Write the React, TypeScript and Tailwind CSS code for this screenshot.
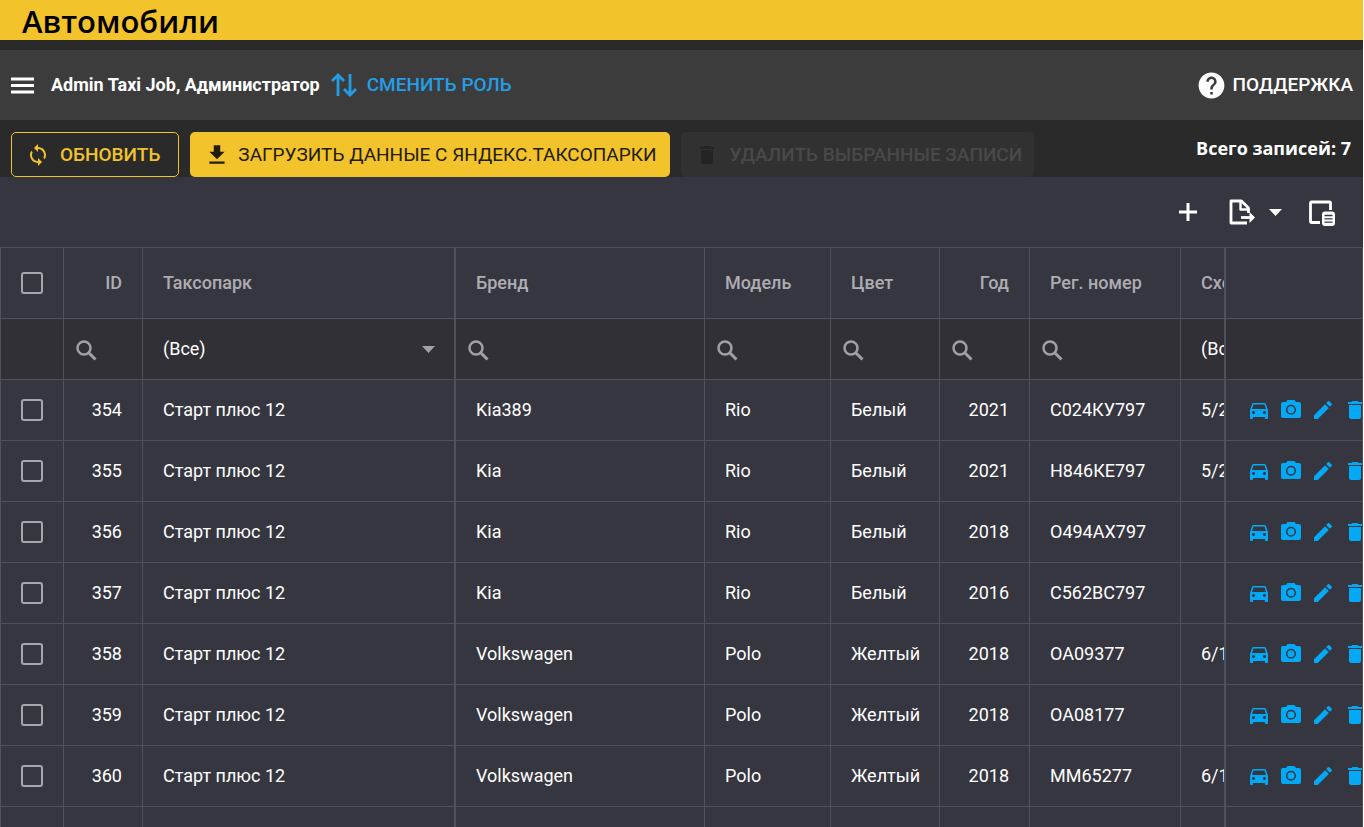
import type { ReactNode } from "react";
import {
  MdDelete,
  MdDirectionsCar,
  MdEdit,
  MdFileDownload,
  MdHelp,
  MdLoop,
} from "react-icons/md";

type Car = {
  id: number;
  brand: string;
  model: string;
  color: string;
  year: number;
  plate: string;
  scheme: string;
};

const cars: Car[] = [
  { id: 354, brand: "Kia389", model: "Rio", color: "Белый", year: 2021, plate: "С024КУ797", scheme: "5/2" },
  { id: 355, brand: "Kia", model: "Rio", color: "Белый", year: 2021, plate: "Н846КЕ797", scheme: "5/2" },
  { id: 356, brand: "Kia", model: "Rio", color: "Белый", year: 2018, plate: "О494АХ797", scheme: "" },
  { id: 357, brand: "Kia", model: "Rio", color: "Белый", year: 2016, plate: "С562ВС797", scheme: "" },
  { id: 358, brand: "Volkswagen", model: "Polo", color: "Желтый", year: 2018, plate: "ОА09377", scheme: "6/1" },
  { id: 359, brand: "Volkswagen", model: "Polo", color: "Желтый", year: 2018, plate: "ОА08177", scheme: "" },
  { id: 360, brand: "Volkswagen", model: "Polo", color: "Желтый", year: 2018, plate: "ММ65277", scheme: "6/1" },
];

const cell = "overflow-hidden border-r border-b border-[#515159] px-5 whitespace-nowrap";
const thickCell = "overflow-hidden border-r-2 border-b border-[#515159] px-5 whitespace-nowrap";
const checkCell = "border-r border-b border-l border-[#515159] p-0";

function MenuIcon() {
  return (
    <svg width="23" height="17" viewBox="0 0 23 17" stroke="currentColor" strokeWidth="3" aria-hidden="true">
      <path d="M0 2h23M0 8.500h23M0 15h23" />
    </svg>
  );
}

function PlusIcon() {
  return (
    <svg width="18" height="18" viewBox="0 0 18 18" stroke="currentColor" strokeWidth="3" aria-hidden="true">
      <path d="M9 0v18M0 9h18" />
    </svg>
  );
}

function SearchIcon() {
  return (
    <svg width="21" height="21" viewBox="0 0 21 21" fill="none" stroke="currentColor" className="shrink-0" aria-hidden="true">
      <circle cx="8" cy="8" r="6.500" strokeWidth="2.500" />
      <path d="M12.500 12.500l7 7" strokeWidth="3" />
    </svg>
  );
}

function SwapIcon() {
  return (
    <svg width="26" height="24" viewBox="0 0 26 24" fill="none" stroke="currentColor" strokeWidth="2.8" aria-hidden="true">
      <path d="M7 23V2M1 8l6-6 6 6M19 1v21M13 16l6 6 6-6" />
    </svg>
  );
}

function ExportIcon() {
  return (
    <svg width="26" height="26" viewBox="0 0 26 26" fill="none" stroke="currentColor" strokeWidth="2.8" strokeLinejoin="round" aria-hidden="true">
      <path d="M18 24H2V2h10.500l7 7v5" />
      <path d="M11.500 2v8.500h8" strokeWidth="2.400" />
      <path d="M12 18.500h9" />
      <path d="M20.500 13l5.500 5.500-5.500 5.500z" fill="currentColor" stroke="none" />
    </svg>
  );
}

function ColumnChooserIcon() {
  return (
    <svg width="26" height="26" viewBox="0 0 26 26" fill="none" stroke="currentColor" strokeWidth="2.800" aria-hidden="true">
      <path d="M11 22.500H2.500a1 1 0 0 1-1-1V3a1 1 0 0 1 1-1h18a1 1 0 0 1 1 1V10" />
      <rect x="13" y="11.500" width="13" height="14.500" rx="3" fill="currentColor" stroke="none" />
      <path d="M15.500 15.500h8M15.500 18.800h8M15.500 22.100h8" stroke="#363640" strokeWidth="1.300" />
    </svg>
  );
}

function CameraIcon() {
  return (
    <svg viewBox="0 0 24 24" className="size-6" aria-hidden="true">
      <path d="M8.500 2L7 4H4a2 2 0 0 0-2 2v12a2 2 0 0 0 2 2h16a2 2 0 0 0 2-2V6a2 2 0 0 0-2-2h-3l-1.500-2z" fill="currentColor" />
      <circle cx="12" cy="11.800" r="4.300" fill="none" stroke="#363640" strokeWidth="1.500" />
    </svg>
  );
}

function Caret() {
  return (
    <svg width="13" height="7" viewBox="0 0 13 7" fill="currentColor" aria-hidden="true">
      <path d="M0 0h13L6.500 7z" />
    </svg>
  );
}

function Check({ label }: { label: string }) {
  return (
    <input
      type="checkbox"
      aria-label={label}
      className="mx-auto block size-[22px] appearance-none rounded-[3px] border-2 border-[#a6a6ab] checked:bg-[#03a9f4]"
    />
  );
}

function SearchCell({ label }: { label: string }) {
  return (
    <td className="overflow-hidden border-r border-b border-[#515159] p-0">
      <label className="flex items-center pt-0.5 pl-3 text-[#a0a0a5]">
        <SearchIcon />
        <input aria-label={label} className="h-10 w-full min-w-0 bg-transparent pl-2 text-white outline-none" />
      </label>
    </td>
  );
}

function Action({ label, children }: { label: string; children: ReactNode }) {
  return (
    <button type="button" aria-label={label} className="size-6 shrink-0 text-[#03a9f4]">
      {children}
    </button>
  );
}

export default function App() {
  return (
    <div className="flex h-screen flex-col overflow-hidden border-r border-white bg-[#2a2a2a] font-[Roboto,sans-serif] text-lg text-white">
      <header className="h-10 shrink-0 bg-[#f3c32c] pl-[22px]">
        <h1 className="font-['Open_Sans','Noto_Sans',sans-serif] text-[31px] leading-[42px] font-semibold text-black">Автомобили</h1>
      </header>

      <nav className="mt-2.5 flex h-[70px] shrink-0 items-center bg-[#3c3c3c] pr-2.5 pl-[11px]">
        <button type="button" aria-label="Меню">
          <MenuIcon />
        </button>
        <span className="ml-[17px] font-bold">Admin Taxi Job, Администратор</span>
        <button type="button" className="ml-[11px] flex items-center gap-2.5 text-[19px] font-medium text-[#239ee6]">
          <SwapIcon />
          СМЕНИТЬ РОЛЬ
        </button>
        <a href="#support" className="ml-auto flex items-center gap-1.5 text-[19px] font-medium">
          <MdHelp className="size-[31px]" />
          ПОДДЕРЖКА
        </a>
      </nav>

      <div className="flex h-[57px] shrink-0 items-start gap-[11px] pt-3 pr-3 pl-[11px] text-[19px]">
        <button type="button" className="flex h-[45px] items-center gap-2.5 rounded-[5px] border border-[#f3c32c] pr-[18px] pl-3.5 font-medium text-[#f3c32c]">
          <MdLoop className="size-6" />
          ОБНОВИТЬ
        </button>
        <button type="button" className="flex h-[45px] items-center gap-2 rounded-[5px] bg-[#f3c32c] px-3.5 text-[#221b06]">
          <MdFileDownload className="size-[26px]" />
          ЗАГРУЗИТЬ ДАННЫЕ С ЯНДЕКС.ТАКСОПАРКИ
        </button>
        <button type="button" disabled className="flex h-[45px] items-center gap-2.5 rounded-[5px] bg-[#313131] pr-3 pl-3.5 font-medium text-[#494949]">
          <MdDelete className="size-6 text-[#242424]" />
          УДАЛИТЬ ВЫБРАННЫЕ ЗАПИСИ
        </button>
        <p className="ml-auto font-['Open_Sans','Noto_Sans',sans-serif] text-lg leading-8 font-bold">Всего записей: 7</p>
      </div>

      <main className="flex min-h-0 flex-1 flex-col overflow-hidden bg-[#363640]">
        <div className="flex h-[70px] shrink-0 items-center justify-end pr-7">
          <button type="button" aria-label="Добавить">
            <PlusIcon />
          </button>
          <button type="button" aria-label="Экспорт" className="ml-8 flex items-center gap-3.5">
            <ExportIcon />
            <Caret />
          </button>
          <button type="button" aria-label="Выбор столбцов" className="ml-[27px] pt-0.5">
            <ColumnChooserIcon />
          </button>
        </div>

        <table className="w-full min-w-[1200px] table-fixed border-separate border-spacing-0 border-t border-[#515159] text-left">
          <colgroup>
            <col className="w-16" />
            <col className="w-[79px]" />
            <col className="w-[313px]" />
            <col />
            <col className="w-[126px]" />
            <col className="w-[109px]" />
            <col className="w-[90px]" />
            <col className="w-[151px]" />
            <col className="w-[45px]" />
            <col className="w-[137px]" />
          </colgroup>
          <thead>
            <tr className="h-[71px] text-[#adadb1] [&>th]:font-medium">
              <th className={checkCell}><Check label="Выбрать все" /></th>
              <th className={cell + " text-right"}>ID</th>
              <th className={thickCell}>Таксопарк</th>
              <th className={cell}>Бренд</th>
              <th className={cell}>Модель</th>
              <th className={cell}>Цвет</th>
              <th className={cell + " text-right"}>Год</th>
              <th className={cell}>Рег. номер</th>
              <th className="overflow-hidden border-r-2 border-b border-[#515159] pl-5 whitespace-nowrap">Схема</th>
              <th className="border-r border-b border-[#515159]" aria-label="Действия" />
            </tr>
          </thead>
          <tbody>
            <tr className="h-[61px] bg-[#303036]">
              <td className={checkCell} />
              <SearchCell label="Поиск по ID" />
              <td className="border-r-2 border-b border-[#515159] p-0">
                <div className="flex items-center pr-[19px]">
                  <select aria-label="Таксопарк" className="min-w-0 flex-1 appearance-none bg-transparent pl-5 outline-none">
                    <option>(Все)</option>
                  </select>
                  <span className="text-[#a0a0a5]"><Caret /></span>
                </div>
              </td>
              <SearchCell label="Поиск по бренду" />
              <SearchCell label="Поиск по модели" />
              <SearchCell label="Поиск по цвету" />
              <SearchCell label="Поиск по году" />
              <SearchCell label="Поиск по номеру" />
              <td className="overflow-hidden border-r-2 border-b border-[#515159] p-0">
                <select aria-label="Схема" className="w-20 appearance-none bg-transparent pl-5 outline-none">
                  <option>(Все)</option>
                </select>
              </td>
              <td className="border-r border-b border-[#515159]" />
            </tr>
            {cars.map((car) => (
              <tr key={car.id} className="h-[61px]">
                <td className={checkCell}><Check label={`Выбрать ${car.id}`} /></td>
                <td className={cell + " text-right"}>{car.id}</td>
                <td className={thickCell}>Старт плюс 12</td>
                <td className={cell}>{car.brand}</td>
                <td className={cell}>{car.model}</td>
                <td className={cell}>{car.color}</td>
                <td className={cell + " text-right"}>{car.year}</td>
                <td className={cell}>{car.plate}</td>
                <td className="overflow-hidden border-r-2 border-b border-[#515159] pl-5 whitespace-nowrap">{car.scheme}</td>
                <td className="overflow-hidden border-r border-b border-[#515159] p-0">
                  <div className="flex gap-2 pl-[21px]">
                    <Action label="Автомобиль"><MdDirectionsCar className="size-6" /></Action>
                    <Action label="Фото"><CameraIcon /></Action>
                    <Action label="Изменить"><MdEdit className="size-6" /></Action>
                    <Action label="Удалить"><MdDelete className="size-6" /></Action>
                  </div>
                </td>
              </tr>
            ))}
            <tr className="h-[61px]">
              <td className={checkCell} />
              <td className={cell} />
              <td className={thickCell} />
              <td className={cell} />
              <td className={cell} />
              <td className={cell} />
              <td className={cell} />
              <td className={cell} />
              <td className="border-r-2 border-b border-[#515159]" />
              <td className="border-r border-b border-[#515159]" />
            </tr>
          </tbody>
        </table>
      </main>
    </div>
  );
}
